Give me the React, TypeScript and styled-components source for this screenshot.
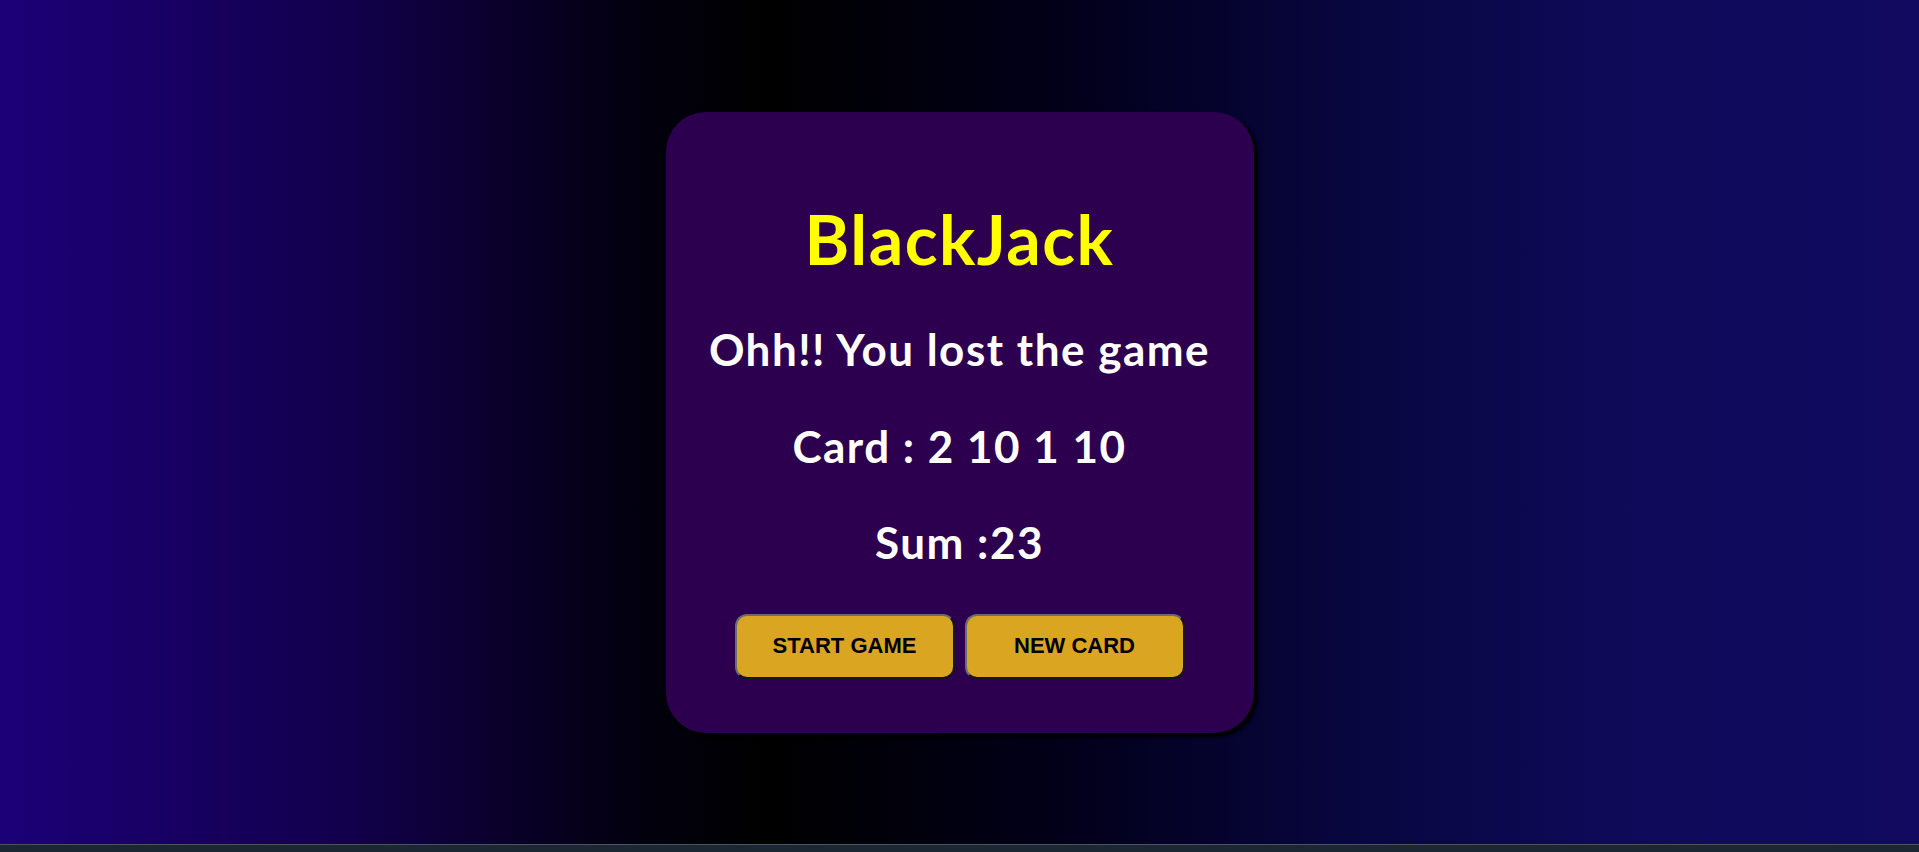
import React from "react";
import styled, { createGlobalStyle } from "styled-components";

const Global = createGlobalStyle`
  html, body { margin: 0; padding: 0; }
  body { background: #000; overflow: hidden; }
`;

const Page = styled.div`
  width: 1919px;
  height: 852px;
  display: flex;
  flex-direction: column;
`;

const Stage = styled.main`
  height: 844px;
  display: flex;
  align-items: center;
  justify-content: center;
  background: linear-gradient(
    to right,
    #1c0078 0%,
    #12004c 18%,
    #03000f 33%,
    #000000 40%,
    #02001a 56%,
    #08063e 70%,
    #0e0a58 84%,
    #110a60 100%
  );
`;

const Footer = styled.footer`
  height: 8px;
  box-sizing: border-box;
  background: #1b2833;
  border-top: 1px solid #4a5560;
`;

const Card = styled.section`
  width: 588px;
  height: 621px;
  box-sizing: border-box;
  background: #2d004f;
  border-radius: 40px;
  box-shadow: 3px 3px 3px 1px #000;
  display: flex;
  flex-direction: column;
  align-items: center;
  padding-top: 87px;
  font-family: "Trebuchet MS", "Lato", "Open Sans", sans-serif;
`;

const Title = styled.h1`
  margin: 0;
  height: 80px;
  line-height: 80px;
  font-size: 68px;
  font-weight: 700;
  letter-spacing: 1.5px;
  color: #ffff00;
`;

const Line = styled.p<{ $top: number }>`
  margin: ${(p) => p.$top}px 0 0;
  height: 60px;
  line-height: 60px;
  font-size: 44px;
  font-weight: 700;
  letter-spacing: 1.5px;
  color: #ffffff;
  white-space: nowrap;
`;

const Buttons = styled.div`
  display: flex;
  gap: 10px;
  margin-top: 42px;
`;

const Button = styled.button`
  width: 220px;
  height: 65px;
  box-sizing: border-box;
  background: #daa520;
  border: 2px solid;
  border-color: #6a6a78 #151515 #151515 #6a6a78;
  border-radius: 12px;
  font-family: "Liberation Sans", Arial, sans-serif;
  font-weight: 700;
  font-size: 22px;
  color: #000;
  text-transform: uppercase;
  cursor: pointer;
`;

export default function App() {
  return (
    <Page>
      <Global />
      <Stage>
        <Card>
          <Title>BlackJack</Title>
          <Line $top={40}>Ohh!! You lost the game</Line>
          <Line $top={37}>Card : 2 10 1 10</Line>
          <Line $top={36}>Sum :23</Line>
          <Buttons>
            <Button>Start Game</Button>
            <Button>New Card</Button>
          </Buttons>
        </Card>
      </Stage>
      <Footer />
    </Page>
  );
}
